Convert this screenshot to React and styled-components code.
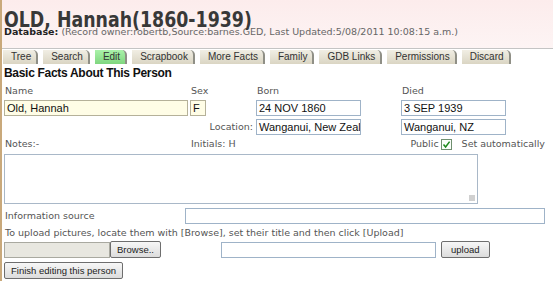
import styled, { createGlobalStyle } from 'styled-components';

const Global = createGlobalStyle`
  html, body { margin: 0; padding: 0; background: #fff; }
  body { font-family: "DejaVu Sans", Verdana, sans-serif; }
`;

const Page = styled.div`
  width: 553px;
  height: 281px;
  border-left: 2px solid #c9a97b;
  box-sizing: border-box;
  overflow: hidden;
`;

const Header = styled.div`
  background: linear-gradient(#fcecec, #fdf4f4);
  padding: 12px 0 0 2px;
  height: 36px;
`;

const Title = styled.h1`
  margin: 0;
  font-family: "DejaVu Sans", Verdana, sans-serif;
  font-weight: bold;
  font-size: 22px;
  line-height: 15px;
  color: #383838;
  white-space: nowrap;
  transform: scaleX(0.79);
  transform-origin: left center;
`;

const Meta = styled.div`
  font-size: 9.5px;
  color: #666;
  line-height: 9px;
  white-space: nowrap;
  b { color: #222; }
`;

const TabBar = styled.div`
  display: flex;
  gap: 5px;
  border-top: 1px solid #c4c4c4;
  padding-left: 1px;
  height: 15px;
`;

const Tab = styled.div`
  flex-shrink: 0;
  white-space: nowrap;
  font-family: "Liberation Sans", Arial, sans-serif;
  font-size: 10px;
  line-height: 14px;
  color: #333;
  padding: 0 5px 0 8px;
  margin-top: 1px;
  height: 14px;
  background: ${p => (p.$active ? 'linear-gradient(#aaf2aa, #7fd67f)' : 'linear-gradient(#f1eee4, #dad5c3)')};
  border-right: 2px solid #8f8f86;
  border-radius: 0 5px 0 0;
`;

const Body = styled.div`
  padding-left: 2px;
`;

const SectionTitle = styled.div`
  font-family: "Liberation Sans", Arial, sans-serif;
  font-weight: bold;
  font-size: 12px;
  letter-spacing: -0.3px;
  line-height: 14px;
  color: #111;
  margin-top: 2px;
`;

const Grid = styled.div`
  display: grid;
  grid-template-columns: 186px 66px 145px 1fr;
  align-items: center;
  margin-top: 4px;
`;

const Label = styled.div`
  font-size: 9.5px;
  color: #555;
  line-height: 14px;
  white-space: nowrap;
  text-align: ${p => (p.$right ? 'right' : 'left')};
  padding: ${p => (p.$right ? '0 3px 0 0' : '0 0 0 1px')};
`;

const Field = styled.div`
  box-sizing: border-box;
  flex-shrink: 0;
  width: ${p => p.$w}px;
  height: 16px;
  border: 1px solid ${p => (p.$yellow ? '#b5b199' : p.$grey ? '#a9a9a0' : '#9fb3c8')};
  background: ${p => (p.$yellow ? '#fffde6' : p.$grey ? '#e8e7e0' : '#fff')};
  font-family: "Liberation Sans", Arial, sans-serif;
  font-size: 11px;
  line-height: 14px;
  color: #111;
  padding-left: 2px;
  white-space: nowrap;
  overflow: hidden;
  margin: 2px 0 1px;
`;

const NotesRow = styled.div`
  display: grid;
  grid-template-columns: 186px 1fr auto;
  align-items: center;
  margin-top: 1px;
`;

const PublicBox = styled.div`
  display: flex;
  align-items: center;
  font-size: 9.5px;
  color: #555;
  line-height: 14px;
  padding-right: 8px;
  white-space: nowrap;
`;

const Check = styled.span`
  display: inline-flex;
  box-sizing: border-box;
  width: 11px;
  height: 11px;
  margin: 0 10px 0 2px;
  border: 1px solid #6f8f6f;
  background: #fbfffb;
  align-items: center;
  justify-content: center;
`;

const TextArea = styled.div`
  box-sizing: border-box;
  width: 474px;
  height: 50px;
  border: 1px solid #a9b8c8;
  margin-top: 3px;
  position: relative;
`;

const Grip = styled.span`
  position: absolute;
  right: 2px;
  bottom: 2px;
  width: 6px;
  height: 6px;
  background-image: radial-gradient(#999 0.6px, transparent 0.8px);
  background-size: 2px 2px;
`;

const SourceRow = styled.div`
  display: flex;
  justify-content: space-between;
  align-items: center;
  padding-right: 8px;
  margin-top: 2px;
`;

const Hint = styled.div`
  font-size: 9.5px;
  color: #555;
  line-height: 14px;
  padding-left: 1px;
  margin-top: 1px;
  white-space: nowrap;
`;

const UploadRow = styled.div`
  display: flex;
  align-items: center;
`;

const Button = styled.div`
  box-sizing: border-box;
  flex-shrink: 0;
  display: inline-block;
  height: 17px;
  border: 1px solid #6e6e6e;
  border-radius: 2px;
  background: linear-gradient(#f7f7f7, #dcdcdc);
  font-family: "Liberation Sans", Arial, sans-serif;
  font-size: 9.5px;
  line-height: 15px;
  color: #222;
  white-space: nowrap;
  padding: 0 ${p => p.$pad || 5}px;
  margin-left: ${p => p.$ml || 0}px;
`;

const FinishRow = styled.div`
  margin-top: 0;
`;

const UploadTitle = styled(Field)`
  margin-left: 60px;
`;

const tabs = ['Tree', 'Search', 'Edit', 'Scrapbook', 'More Facts', 'Family', 'GDB Links', 'Permissions', 'Discard'];

export default function App() {
  return (
    <Page>
      <Global />
      <Header>
        <Title>OLD, Hannah(1860-1939)</Title>
        <Meta>
          <b>Database:</b> (Record owner:robertb,Source:barnes.GED, Last Updated:5/08/2011 10:08:15 a.m.)
        </Meta>
      </Header>
      <TabBar>
        {tabs.map(t => (
          <Tab key={t} $active={t === 'Edit'}>{t}</Tab>
        ))}
      </TabBar>
      <Body>
        <SectionTitle>Basic Facts About This Person</SectionTitle>
        <Grid>
          <Label>Name</Label>
          <Label>Sex</Label>
          <Label>Born</Label>
          <Label>Died</Label>
          <Field $w={184} $yellow>Old, Hannah</Field>
          <Field $w={16} $yellow>F</Field>
          <Field $w={105}>24 NOV 1860</Field>
          <Field $w={105}>3 SEP 1939</Field>
          <span />
          <Label $right>Location:</Label>
          <Field $w={105}>Wanganui, New Zealand</Field>
          <Field $w={105}>Wanganui, NZ</Field>
        </Grid>
        <NotesRow>
          <Label>Notes:-</Label>
          <Label>Initials: H</Label>
          <PublicBox>
            <span>Public</span>
            <Check>
              <svg width="9" height="9" viewBox="0 0 9 9">
                <path d="M1.5 4.5 L3.6 7 L7.6 1.6" fill="none" stroke="#1d8a1d" strokeWidth="1.5" />
              </svg>
            </Check>
            <span>Set automatically</span>
          </PublicBox>
        </NotesRow>
        <TextArea><Grip /></TextArea>
        <SourceRow>
          <Label>Information source</Label>
          <Field $w={360} />
        </SourceRow>
        <Hint>To upload pictures, locate them with [Browse], set their title and then click [Upload]</Hint>
        <UploadRow>
          <Field $w={106} $grey />
          <Button $pad={6}>Browse..</Button>
          <UploadTitle $w={215} />
          <Button $ml={5} $pad={9}>upload</Button>
        </UploadRow>
        <FinishRow>
          <Button $pad={6}>Finish editing this person</Button>
        </FinishRow>
      </Body>
    </Page>
  );
}
